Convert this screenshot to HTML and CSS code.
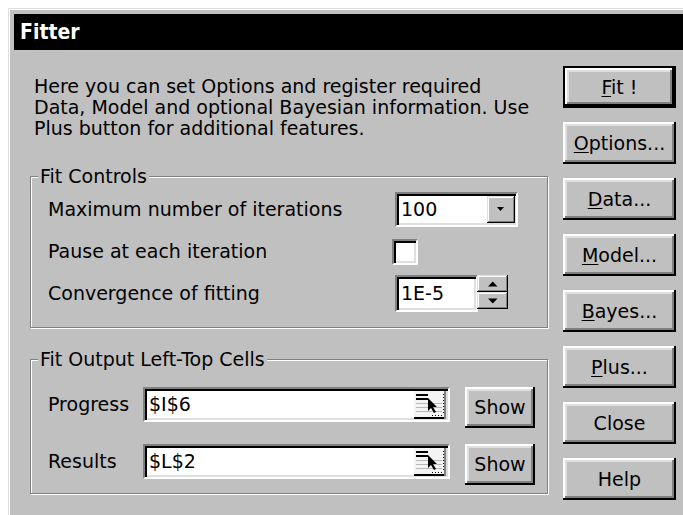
FILE: index.html
```html
<!DOCTYPE html>
<html lang="en">
<head>
<meta charset="utf-8">
<title>Fitter</title>
<link rel="stylesheet" href="styles.css">
</head>
<body>
<div class="dialog">
  <div class="titlebar">Fitter</div>
  <div class="client">
    <div class="main">
      <p class="intro">Here you can set Options and register required<br>Data, Model and optional Bayesian information. Use<br>Plus button for additional features.</p>

      <fieldset class="group">
        <legend>Fit Controls</legend>
        <div class="controls">
          <span class="lbl">Maximum number of iterations</span>
          <div class="combo sunken">
            <span class="value">100</span>
            <span class="dropbtn raised-sm">
              <svg width="8" height="5" viewBox="0 0 8 5"><path d="M0 0H7L3.5 4Z" fill="#000"/></svg>
            </span>
          </div>

          <span class="lbl">Pause at each iteration</span>
          <span class="check sunken"></span>

          <span class="lbl">Convergence of fitting</span>
          <div class="spin">
            <span class="spinfield sunken"><span class="value">1E-5</span></span>
            <span class="spinbtns">
              <span class="sb raised-sm"><svg width="10" height="6" viewBox="0 0 10 6"><path d="M0 5.5H9.5L4.75 0.5Z" fill="#000"/></svg></span>
              <span class="sb raised-sm"><svg width="10" height="6" viewBox="0 0 10 6"><path d="M0 0.5H9.5L4.75 5.5Z" fill="#000"/></svg></span>
            </span>
          </div>
        </div>
      </fieldset>

      <fieldset class="group output">
        <legend>Fit Output Left-Top Cells</legend>
        <div class="cells">
          <span class="lbl cell-lbl">Progress</span>
          <div class="refedit sunken">
            <span class="value">$I$6</span>
            <svg class="refbtn" width="32" height="28" viewBox="0 0 32 28">
              <rect x="0" y="0" width="31" height="27" fill="#f4f4f4"/>
              <rect x="2" y="3" width="12" height="2" fill="#000"/>
              <rect x="2" y="7" width="12" height="2" fill="#000"/>
              <rect x="2" y="12" width="26" height="1" fill="#b8b8b8"/>
              <rect x="2" y="16" width="26" height="1" fill="#b8b8b8"/>
              <rect x="2" y="20" width="26" height="1" fill="#b8b8b8"/>
              <path d="M14 7V20L17 17L20 22L22 21L19 16H23Z" fill="#000"/>
              <path d="M29.5 3V24" stroke="#000" stroke-width="1" stroke-dasharray="1 2"/>
              <path d="M18 24.5H28" stroke="#000" stroke-width="1" stroke-dasharray="1 2"/>
              <rect x="0" y="26" width="30" height="2" fill="#000"/>
              <rect x="30" y="0" width="2" height="28" fill="#808080"/>
            </svg>
          </div>
          <button class="btn show">Show</button>

          <span class="lbl cell-lbl">Results</span>
          <div class="refedit sunken">
            <span class="value">$L$2</span>
            <svg class="refbtn" width="32" height="28" viewBox="0 0 32 28">
              <rect x="0" y="0" width="31" height="27" fill="#f4f4f4"/>
              <rect x="2" y="3" width="12" height="2" fill="#000"/>
              <rect x="2" y="7" width="12" height="2" fill="#000"/>
              <rect x="2" y="12" width="26" height="1" fill="#b8b8b8"/>
              <rect x="2" y="16" width="26" height="1" fill="#b8b8b8"/>
              <rect x="2" y="20" width="26" height="1" fill="#b8b8b8"/>
              <path d="M14 7V20L17 17L20 22L22 21L19 16H23Z" fill="#000"/>
              <path d="M29.5 3V24" stroke="#000" stroke-width="1" stroke-dasharray="1 2"/>
              <path d="M18 24.5H28" stroke="#000" stroke-width="1" stroke-dasharray="1 2"/>
              <rect x="0" y="26" width="30" height="2" fill="#000"/>
              <rect x="30" y="0" width="2" height="28" fill="#808080"/>
            </svg>
          </div>
          <button class="btn show">Show</button>
        </div>
      </fieldset>
    </div>

    <div class="buttons">
      <button class="btn side default"><u>F</u>it !</button>
      <button class="btn side"><u>O</u>ptions...</button>
      <button class="btn side"><u>D</u>ata...</button>
      <button class="btn side"><u>M</u>odel...</button>
      <button class="btn side"><u>B</u>ayes...</button>
      <button class="btn side"><u>P</u>lus...</button>
      <button class="btn side">Close</button>
      <button class="btn side">Help</button>
    </div>
  </div>
</div>
</body>
</html>
```

FILE: styles.css
```css
html, body {
  margin: 0;
  background: #fff;
}

body {
  font-family: "DejaVu Sans", sans-serif;
  font-size: 19px;
  line-height: 21px;
  color: #000;
  overflow: hidden;
}

/* window frame, running off the right and bottom edges */
.dialog {
  margin: 8px -20px 0 8px;
  height: 530px;
  box-sizing: border-box;
  background: #c0c0c0;
  border-top: 1px solid #dfdfdf;
  border-left: 1px solid #dfdfdf;
  box-shadow: inset 1px 1px #fff;
  padding: 5px 0 0 5px;
}

.titlebar {
  height: 36px;
  background: #000;
  color: #fff;
  font-family: "DejaVu Sans Condensed", "DejaVu Sans", sans-serif;
  font-stretch: condensed;
  font-weight: bold;
  font-size: 21px;
  line-height: 36px;
  padding-left: 6px;
}

.client {
  display: flex;
  gap: 15px;
  padding: 16px 0 0 16px;
}

.main {
  width: 518px;
  display: flex;
  flex-direction: column;
}

.intro {
  margin: 10px 0 0 0;
  padding-left: 4px;
  white-space: nowrap;
}

/* etched group frame */
.group {
  margin: 27px 0 0 0;
  padding: 0 0 16px 7px;
  border: 1px solid #808080;
  box-shadow: inset 1px 1px #fff, 1px 1px #fff;
  min-width: 0;
}

.group legend {
  padding: 0 2px;
  background: #c0c0c0;
}

.group.output {
  margin-top: 21px;
  padding-bottom: 8px;
}

.controls {
  display: grid;
  grid-template-columns: 344px auto;
  grid-auto-rows: 35px;
  row-gap: 7px;
  align-items: center;
  padding: 5px 0 0 10px;
}

.lbl {
  white-space: nowrap;
}

/* sunken 3d edge */
.sunken {
  background: #fff;
  border: 2px solid;
  border-color: #808080 #fff #fff #808080;
  box-shadow: inset 2px 2px #000, inset -2px -2px #dfdfdf;
  box-sizing: border-box;
}

/* small raised edge for scroll arrows */
.raised-sm {
  background: #c0c0c0;
  box-sizing: border-box;
  box-shadow: inset -1px -1px #000, inset 1px 1px #dfdfdf, inset -2px -2px #808080, inset 2px 2px #fff;
  display: flex;
  align-items: center;
  justify-content: center;
}

.combo {
  margin-left: 3px;
  width: 123px;
  height: 35px;
  display: flex;
  align-items: center;
  padding: 0 1px 0 4px;
}

.value {
  flex: 1;
  line-height: 21px;
}

.dropbtn {
  width: 28px;
  height: 27px;
}

.check {
  width: 26px;
  height: 26px;
}

.spin {
  margin-left: 3px;
  display: flex;
  align-items: flex-start;
  height: 37px;
}

.spinfield {
  width: 83px;
  height: 37px;
  display: flex;
  align-items: center;
  padding-left: 4px;
}

.spinbtns {
  display: flex;
  flex-direction: column;
  margin-left: -1px;
}

.sb {
  width: 31px;
  height: 17px;
}

/* cell reference rows */
.cells {
  display: grid;
  grid-template-columns: 95px 307px 70px;
  grid-auto-rows: 41px;
  row-gap: 16px;
  align-items: start;
  padding: 17px 0 0 10px;
}

.cell-lbl {
  line-height: 35px;
}

.refedit {
  height: 35px;
  display: flex;
  align-items: center;
  padding: 0 2px 0 4px;
}

.refbtn {
  flex: none;
}

.show {
  margin-left: 15px;
  width: 70px;
  height: 41px;
}

/* push buttons */
.btn {
  font: inherit;
  color: #000;
  background: #c0c0c0;
  border: 0;
  padding: 0;
  box-sizing: border-box;
  box-shadow: inset -2px -2px #000, inset 2px 2px #fff, inset -4px -4px #808080, inset 4px 4px #dfdfdf;
}

.btn u {
  text-underline-offset: 2px;
}

.buttons {
  display: flex;
  flex-direction: column;
  gap: 14px;
}

.side {
  width: 113px;
  height: 42px;
}

.side.default {
  border: 2px solid #000;
}
```
